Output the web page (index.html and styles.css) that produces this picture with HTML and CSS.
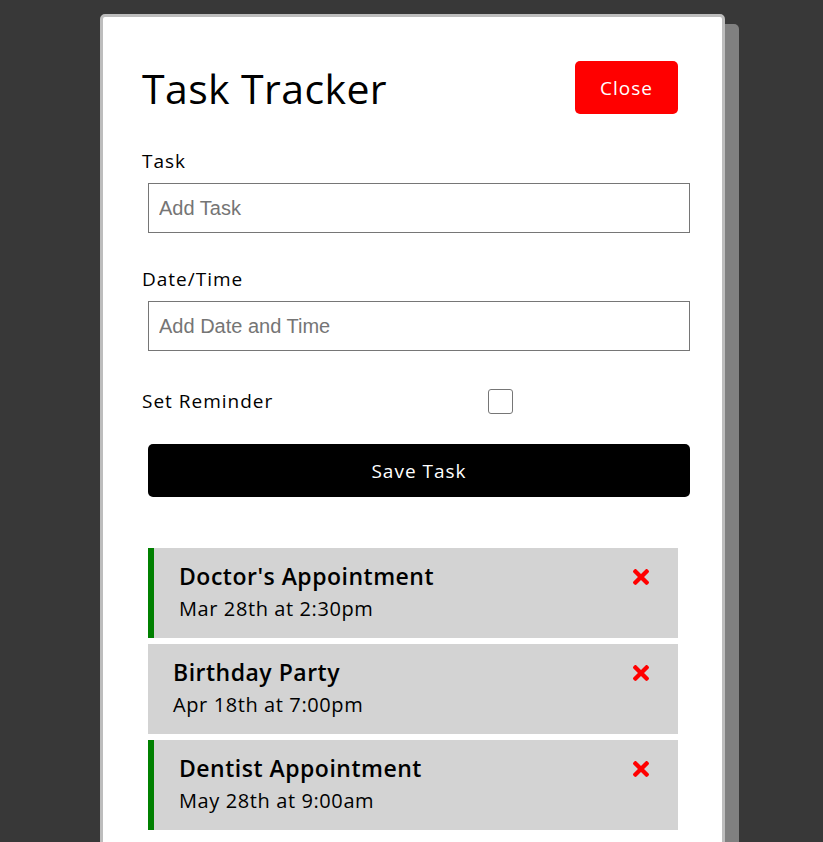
FILE: index.html
```html
<!DOCTYPE html>
<html lang="en">
<head>
    <meta charset="UTF-8"/>
    <title>Task Tracker</title>
    <link rel="stylesheet" href="styles.css">
</head>
<body>
<div class="container">
    <header class="header">
        <h1>Task Tracker</h1>
        <button class="btn btn-close">Close</button>
    </header>

    <form class="add-form">
        <div class="form-control">
            <label>Task</label>
            <input type="text" placeholder="Add Task"/>
        </div>
        <div class="form-control">
            <label>Date/Time</label>
            <input type="text" placeholder="Add Date and Time"/>
        </div>
        <div class="form-control form-control-check">
            <label>Set Reminder</label>
            <input type="checkbox"/>
        </div>
        <button type="button" class="btn btn-block">Save Task</button>
    </form>

    <div class="tasks">
        <div class="task reminder">
            <div class="task-text">
                <h3>Doctor's Appointment</h3>
                <p>Mar 28th at 2:30pm</p>
            </div>
            <svg class="del" viewBox="0 80 352 352"><path d="M242.72 256l100.07-100.07c12.28-12.28 12.28-32.19 0-44.48l-22.24-22.24c-12.28-12.28-32.19-12.28-44.48 0L176 189.28 75.930 89.21c-12.28-12.28-32.19-12.28-44.48 0L9.21 111.45c-12.28 12.28-12.28 32.19 0 44.48L109.28 256 9.21 356.07c-12.28 12.28-12.28 32.19 0 44.48l22.24 22.24c12.28 12.28 32.2 12.28 44.48 0L176 322.72l100.07 100.07c12.28 12.28 32.2 12.28 44.48 0l22.24-22.24c12.28-12.28 12.28-32.19 0-44.48L242.72 256z"/></svg>
        </div>
        <div class="task">
            <div class="task-text">
                <h3>Birthday Party</h3>
                <p>Apr 18th at 7:00pm</p>
            </div>
            <svg class="del" viewBox="0 80 352 352"><path d="M242.72 256l100.07-100.07c12.28-12.28 12.28-32.19 0-44.48l-22.24-22.24c-12.28-12.28-32.19-12.28-44.48 0L176 189.28 75.93 89.21c-12.28-12.28-32.19-12.28-44.48 0L9.21 111.45c-12.28 12.28-12.28 32.19 0 44.48L109.28 256 9.21 356.07c-12.28 12.28-12.28 32.19 0 44.48l22.24 22.24c12.28 12.28 32.2 12.28 44.48 0L176 322.72l100.07 100.07c12.28 12.28 32.2 12.28 44.48 0l22.24-22.24c12.28-12.28 12.28-32.19 0-44.48L242.72 256z"/></svg>
        </div>
        <div class="task reminder">
            <div class="task-text">
                <h3>Dentist Appointment</h3>
                <p>May 28th at 9:00am</p>
            </div>
            <svg class="del" viewBox="0 80 352 352"><path d="M242.72 256l100.07-100.07c12.28-12.28 12.28-32.19 0-44.48l-22.24-22.24c-12.28-12.28-32.19-12.28-44.48 0L176 189.28 75.93 89.21c-12.28-12.28-32.19-12.28-44.48 0L9.21 111.45c-12.28 12.28-12.28 32.19 0 44.48L109.28 256 9.21 356.07c-12.28 12.28-12.28 32.19 0 44.48l22.24 22.24c12.28 12.28 32.2 12.28 44.48 0L176 322.72l100.07 100.07c12.28 12.28 32.2 12.28 44.48 0l22.24-22.24c12.28-12.28 12.28-32.19 0-44.48L242.72 256z"/></svg>
        </div>
    </div>
</div>
</body>
</html>
```

FILE: styles.css
```css
* {box-sizing: border-box; margin: 0; padding: 0;}
body {
    background: #383838;
    font-family: "Open Sans", "Noto Sans", sans-serif;
    color: #000;
}
.container {
    width: 625px;
    margin: 14px 0 0 100px;
    padding: 39px 39px 40px 40px;
    background: #fff;
    border: 3px solid #bdbdbd;
    border-radius: 5px;
    box-shadow: 14px 10px 0 #808080;
}
.header {display: flex; justify-content: space-between; align-items: center;}
.header h1 {font-size: 41px; font-weight: 400; letter-spacing: 0.4px; margin-left: -1px;}
.btn {
    display: inline-block;
    background: #000;
    color: #fff;
    border: none;
    border-radius: 5px;
    margin: 5px;
    font-family: inherit;
    font-size: 19px;
    letter-spacing: 1px;
    cursor: pointer;
}
.btn-close {background: #f00; width: 103px; height: 53px;}
.btn-block {display: block; width: 542px; height: 53px; margin: 28px 0 0 5px;}

.form-control {margin-top: 27px;}
.form-control label {display: block; font-size: 19px; line-height: 30px; letter-spacing: 1px; margin-left: -1px;}
.form-control input {
    display: block;
    width: 542px;
    height: 50px;
    margin: 7px 0 0 5px;
    padding: 0 10px;
    border: 1px solid #767676;
    font-family: "Liberation Sans", Arial, sans-serif;
    font-size: 20px;
}
.form-control input::placeholder {color: #757575;}
.form-control + .form-control {margin-top: 31px;}

.form-control-check {display: flex; align-items: center;}
.form-control-check label {width: 346px;}
.form-control-check input {
    appearance: none;
    width: 25px;
    height: 25px;
    margin: 0;
    padding: 0;
    border: 1px solid #767676;
    border-radius: 3px;
}
.form-control + .form-control-check {margin-top: 35px;}

.tasks {margin-top: 51px;}
.task {
    display: flex;
    justify-content: space-between;
    width: 530px;
    height: 90px;
    margin: 0 0 6px 5px;
    padding: 12px 29px 0 25px;
    background: #d3d3d3;
}
.task.reminder {border-left: 6px solid #008000;}
.task h3 {font-size: 23px; font-weight: 600; line-height: 32px; letter-spacing: 0.5px;}
.task p {font-size: 20px; line-height: 34px; letter-spacing: 0.6px;}
.del {width: 16px; height: 16px; fill: #f00; margin-top: 9px;}
```
